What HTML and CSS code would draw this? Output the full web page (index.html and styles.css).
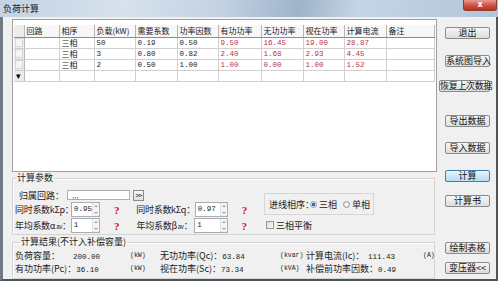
FILE: index.html
```html
<!DOCTYPE html>
<html lang="zh">
<head>
    <meta charset="UTF-8">
    <title>负荷计算</title>
    <link rel="stylesheet" href="styles.css">
</head>
<body>

<div class="window">
    <div class="titlebar">
        <span class="title">负荷计算</span>
        <span class="close">x</span>
    </div>
    <div class="client">
        <div class="main">
            <div class="grid-frame">
                <table class="grid">
                    <colgroup>
                        <col class="c-sel"><col class="c35"><col class="c35"><col class="c41"><col class="c42"><col class="c41">
                        <col class="c43"><col class="c42"><col class="c41"><col class="c42"><col>
                    </colgroup>
                    <thead>
                        <tr>
                            <th class="sel"></th>
                            <th>回路</th>
                            <th>相序</th>
                            <th>负载(kW)</th>
                            <th>需要系数</th>
                            <th>功率因数</th>
                            <th>有功功率</th>
                            <th>无功功率</th>
                            <th>视在功率</th>
                            <th>计算电流</th>
                            <th>备注</th>
                        </tr>
                    </thead>
                    <tbody>
                        <tr>
                            <td class="sel"><span class="box"></span></td>
                            <td></td>
                            <td>三相</td>
                            <td class="n">50</td>
                            <td class="n">0.19</td>
                            <td class="n">0.50</td>
                            <td class="n red">9.50</td>
                            <td class="n red">16.45</td>
                            <td class="n red">19.00</td>
                            <td class="n red">28.87</td>
                            <td></td>
                        </tr>
                        <tr>
                            <td class="sel"><span class="box"></span></td>
                            <td></td>
                            <td>三相</td>
                            <td class="n">3</td>
                            <td class="n">0.80</td>
                            <td class="n">0.82</td>
                            <td class="n red">2.40</td>
                            <td class="n red">1.68</td>
                            <td class="n red">2.93</td>
                            <td class="n red">4.45</td>
                            <td></td>
                        </tr>
                        <tr>
                            <td class="sel"><span class="box"></span></td>
                            <td></td>
                            <td>三相</td>
                            <td class="n">2</td>
                            <td class="n">0.50</td>
                            <td class="n">1.00</td>
                            <td class="n red">1.00</td>
                            <td class="n red">0.00</td>
                            <td class="n red">1.00</td>
                            <td class="n red">1.52</td>
                            <td></td>
                        </tr>
                        <tr>
                            <td class="sel new">▾</td>
                            <td></td><td></td><td></td><td></td><td></td>
                            <td></td><td></td><td></td><td></td><td></td>
                        </tr>
                    </tbody>
                </table>
            </div>

            <fieldset class="group params">
                <legend>计算参数</legend>
                <div class="params-body">
                    <div class="params-left">
                        <div class="route-row">
                            <span class="route-label">归属回路：</span>
                            <span class="route-input">,,,</span>
                            <span class="route-btn">&gt;&gt;</span>
                        </div>
                        <div class="coef-row">
                            <span class="coef-label">同时系数kΣp：</span>
                            <span class="spin"><span class="spin-val">0.95</span><span class="spin-arrows"><i class="up"></i><i class="down"></i></span></span>
                            <span class="ask">?</span>
                            <span class="coef-label wide">同时系数kΣq：</span>
                            <span class="spin spin-wide"><span class="spin-val">0.97</span><span class="spin-arrows"><i class="up"></i><i class="down"></i></span></span>
                            <span class="ask">?</span>
                        </div>
                        <div class="coef-row">
                            <span class="coef-label">年均系数α<small>av</small>：</span>
                            <span class="spin"><span class="spin-val">1</span><span class="spin-arrows"><i class="up"></i><i class="down"></i></span></span>
                            <span class="ask">?</span>
                            <span class="coef-label wide">年均系数β<small>av</small>：</span>
                            <span class="spin spin-wide"><span class="spin-val">1</span><span class="spin-arrows"><i class="up"></i><i class="down"></i></span></span>
                            <span class="ask">?</span>
                        </div>
                    </div>
                    <div class="params-right">
                        <div class="phase-box">
                            <span class="phase-label">进线相序：</span>
                            <span class="radio checked"></span><span class="opt">三相</span>
                            <span class="radio"></span><span class="opt">单相</span>
                        </div>
                        <div class="check-row">
                            <span class="check"></span><span>三相平衡</span>
                        </div>
                    </div>
                </div>
            </fieldset>

            <fieldset class="group results">
                <legend>计算结果(不计入补偿容量)</legend>
                <div class="result-grid">
                    <span><span class="r-label">负荷容量：</span><span class="n">200.00</span></span>
                    <span class="unit">(kW)</span>
                    <span>无功功率(Qc)：<span class="n">63.84</span></span>
                    <span class="unit">(kvar)</span>
                    <span><span class="r-label wide">计算电流(Ic)：</span><span class="n">111.43</span></span>
                    <span class="unit">(A)</span>

                    <span>有功功率(Pc)：<span class="n">36.10</span></span>
                    <span class="unit">(kW)</span>
                    <span>视在功率(Sc)：<span class="n">73.34</span></span>
                    <span class="unit">(kVA)</span>
                    <span>补偿前功率因数：<span class="n">0.49</span></span>
                    <span></span>
                </div>
            </fieldset>
        </div>

        <div class="side">
            <button class="btn">退出</button>
            <button class="btn">系统图导入</button>
            <button class="btn btn-long">恢复上次数据</button>
            <button class="btn">导出数据</button>
            <button class="btn">导入数据</button>
            <button class="btn btn-calc">计算</button>
            <button class="btn">计算书</button>
            <button class="btn">绘制表格</button>
            <button class="btn">变压器&lt;&lt;</button>
        </div>
    </div>
</div>

</body>
</html>
```

FILE: styles.css
```css
* {
    box-sizing: border-box;
}
body {
    margin: 0;
    background: #fff;
    font-family: "Noto Sans CJK SC", sans-serif;
    font-size: 9px;
    color: #1b1b1b;
}
.window {
    width: 498px;
    height: 281px;
    display: flex;
    flex-direction: column;
}
.titlebar {
    height: 17px;
    display: flex;
    justify-content: space-between;
    align-items: flex-start;
    padding-left: 3px;
    background: linear-gradient(100deg, #c3d3e4 0%, #d6e1ec 25%, #c2d1e2 45%, #9fb3ca 60%, #c6d5e5 72%, #b2c4da 100%);
}
.title {
    margin-top: 3px;
    line-height: 11px;
    color: #1a1a1a;
}
.close {
    width: 34px;
    height: 11px;
    margin-right: 1px;
    border: 1px solid #8d3b30;
    border-top: none;
    border-radius: 0 0 3px 3px;
    background: linear-gradient(#e79a8f, #d0564a 50%, #b8301f);
    color: #fff;
    text-align: center;
    font: bold 8px/9px "DejaVu Sans", sans-serif;
}
.client {
    flex: 1;
    display: flex;
    background: #f0f0f0;
    border-left: 3px solid #6f7a85;
    border-right: 2px solid #4d5359;
    border-bottom: 2px solid #4d5359;
}
.main {
    width: 434px;
    padding: 2px 0 0 9px;
    display: flex;
    flex-direction: column;
}

/* tabla */
.grid-frame {
    height: 153px;
    border: 1px solid #a0a0a0;
    background: #fff;
    padding: 5px 0 0 1px;
}
.grid {
    width: 421px;
    border-collapse: collapse;
    table-layout: fixed;
    font-size: 8px;
}
.c-sel { width: 10px; }
.c35 { width: 35px; }
.c41 { width: 41px; }
.c42 { width: 42px; }
.c43 { width: 43px; }
.grid th, .grid td {
    height: 11px;
    padding: 0 0 0 2px;
    border-right: 1px solid #d0d0d0;
    border-bottom: 1px solid #d0d0d0;
    text-align: left;
    font-weight: normal;
    line-height: 10px;
    white-space: nowrap;
    overflow: hidden;
}
.grid th {
    height: 12px;
    background: #f7f7f7;
    border-bottom: 1px solid #8a8a8a;
    border-right: 1px solid #b5b5b5;
}
.grid td.sel, .grid th.sel {
    padding: 0;
    background: #ececec;
    border-right: 1px solid #b8b8b8;
}
.box {
    display: block;
    width: 8px;
    height: 9px;
    margin: 0 auto;
    border: 1px solid #d8d8d8;
    background: #f4f4f4;
}
.grid td.new {
    text-align: center;
    font-size: 9px;
    color: #000;
}
.n {
    font-family: "Liberation Mono", monospace;
    font-size: 7.5px;
}
.red {
    color: #b8324a;
}

/* grupos */
.group {
    margin: 1px 0 0;
    padding: 0 2px;
    min-width: 0;
    width: 423px;
    border: 1px solid #d3d3d3;
    box-shadow: inset 1px 1px 0 #fff;
}
.group legend {
    padding: 0 1px;
    margin-left: 1px;
    line-height: 10px;
}
.params {
    height: 62px;
}
.results {
    height: 42px;
    margin-top: 2px;
}
.results legend {
    margin-left: 5px;
}
.params-body {
    display: flex;
}
.params-left {
    width: 249px;
    flex-shrink: 0;
}
.route-row {
    display: flex;
    align-items: center;
    height: 12px;
    margin-top: 6px;
    padding-left: 4px;
}
.route-label {
    width: 48px;
}
.route-input {
    width: 63px;
    height: 10px;
    border: 1px solid #abadb3;
    background: #fff;
    color: #777;
    line-height: 7px;
    padding-left: 4px;
    font-size: 8px;
}
.route-btn {
    width: 11px;
    height: 11px;
    margin-left: 3px;
    border: 1px solid #8a8a8a;
    background: linear-gradient(#fafafa, #dedede);
    font-size: 7px;
    line-height: 9px;
    text-align: center;
    letter-spacing: -1px;
}
.coef-row {
    display: flex;
    align-items: center;
    height: 15px;
    margin-top: 1px;
}
.coef-label {
    width: 56px;
    white-space: nowrap;
    letter-spacing: -0.3px;
}
.coef-label.wide {
    width: 59px;
}
.coef-label small {
    font-size: 6px;
    margin-left: 1px;
}
.spin {
    display: flex;
    width: 30px;
    height: 15px;
    border: 1px solid #abadb3;
    background: #fff;
}
.spin-wide {
    width: 34px;
}
.spin-val {
    flex: 1;
    padding: 2px 0 0 2px;
    font-family: "Liberation Mono", monospace;
    font-size: 7.5px;
    line-height: 9px;
}
.spin-arrows {
    width: 7px;
    display: flex;
    flex-direction: column;
    justify-content: space-around;
    align-items: center;
    background: #f3f3f3;
    border-left: 1px solid #e2e2e2;
}
.spin-arrows i {
    width: 0;
    height: 0;
    border-left: 2px solid transparent;
    border-right: 2px solid transparent;
}
.spin-arrows .up {
    border-bottom: 2px solid #a8a8a8;
}
.spin-arrows .down {
    border-top: 2px solid #a8a8a8;
}
.ask {
    width: 37px;
    padding-left: 14px;
    color: #c8182a;
    font: bold 11px/12px "Liberation Serif", serif;
}
.params-right {
    margin-top: 10px;
    margin-left: 0;
}
.phase-box {
    display: flex;
    align-items: center;
    width: 110px;
    height: 22px;
    padding-left: 4px;
    border: 1px solid #d6d6d6;
    white-space: nowrap;
}
.phase-box > span {
    flex-shrink: 0;
}
.phase-label {
    width: 41px;
}
.radio {
    width: 7px;
    height: 7px;
    border-radius: 50%;
    border: 1px solid #8f9aa3;
    background: radial-gradient(#fdfdfd, #d9dde1);
    margin-right: 2px;
}
.radio.checked {
    background: radial-gradient(circle, #2d6cb0 0 1.5px, #dfe6ee 2px);
}
.opt {
    margin-right: 6px;
}
.check-row {
    display: flex;
    align-items: center;
    height: 10px;
    margin-top: 5px;
    padding-left: 2px;
    white-space: nowrap;
}
.check {
    width: 8px;
    height: 8px;
    margin-right: 2px;
    border: 1px solid #8f9aa3;
    background: linear-gradient(135deg, #dadada, #fafafa);
}

/* resultados */
.result-grid {
    display: grid;
    grid-template-columns: 115px 30px 120px 26px 117px auto;
    grid-auto-rows: 11px;
    row-gap: 2px;
    margin-top: 3px;
    line-height: 11px;
    white-space: nowrap;
}
.r-label {
    display: inline-block;
    width: 58px;
}
.r-label.wide {
    width: 62px;
}
.unit {
    font-family: "Liberation Mono", monospace;
    font-size: 6.5px;
}

/* botones */
.side {
    flex: 1;
    display: flex;
    flex-direction: column;
    align-items: flex-end;
    padding-right: 6px;
}
.btn {
    width: 45px;
    height: 12px;
    padding: 0;
    border: 1px solid #8a8a8a;
    border-radius: 2px;
    background: linear-gradient(#f7f7f7, #dcdcdc);
    font-family: "Noto Sans CJK SC", sans-serif;
    font-size: 9px;
    line-height: 10px;
    color: #111;
    white-space: nowrap;
}
.btn-long {
    width: 51px;
    letter-spacing: -0.3px;
}
.btn-calc {
    border-color: #3c7fb1;
    background: linear-gradient(#e8f5fc, #b4ddf3);
}
.side .btn:nth-child(1) { margin-top: 10px; }
.side .btn:nth-child(2) { margin-top: 16px; }
.side .btn:nth-child(3) { margin-top: 13px; }
.side .btn:nth-child(4) { margin-top: 23px; }
.side .btn:nth-child(5) { margin-top: 15px; }
.side .btn:nth-child(6) { margin-top: 16px; }
.side .btn:nth-child(7) { margin-top: 13px; }
.side .btn:nth-child(8) { margin-top: 35px; }
.side .btn:nth-child(9) { margin-top: 8px; }
```
